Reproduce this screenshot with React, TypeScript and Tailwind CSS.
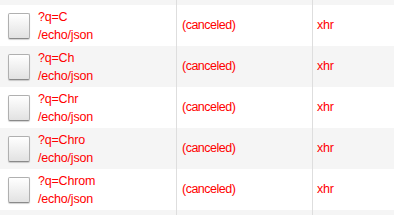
import React from "react";

const rows = ["C", "Ch", "Chr", "Chro", "Chrom"];

function Checkbox() {
  return (
    <div className="w-[22px] h-[26px] rounded-[2px] border border-[#b0b0b0] border-b-[#8a8a8a] bg-gradient-to-b from-[#ffffff] to-[#e2e2e2] shadow-[0_1px_1px_rgba(0,0,0,0.18)]" />
  );
}

function Row({ q, bg }: { q: string; bg: string }) {
  return (
    <div className={`flex h-[41px] ${bg}`}>
      <div className="w-[177px] flex items-center border-r border-[#dedede] pl-[8px]">
        <Checkbox />
        <div className="ml-[8px] flex flex-col leading-[18px]">
          <span>?q={q}</span>
          <span>/echo/json</span>
        </div>
      </div>
      <div className="w-[136px] flex items-center border-r border-[#dedede] pl-[5px] tracking-[-0.5px]">
        (canceled)
      </div>
      <div className="flex-1 flex items-center pl-[4px]">xhr</div>
    </div>
  );
}

function Partial({ bg, h }: { bg: string; h: string }) {
  return (
    <div className={`flex ${h} ${bg}`}>
      <div className="w-[177px] border-r border-[#dedede]" />
      <div className="w-[136px] border-r border-[#dedede]" />
      <div className="flex-1" />
    </div>
  );
}

export default function App() {
  return (
    <div
      className="w-[394px] h-[215px] overflow-hidden bg-white text-[12.5px] tracking-[-0.2px] text-[#ff0000]"
      style={{ fontFamily: '"Liberation Sans", Arial, sans-serif' }}
    >
      <Partial bg="bg-[#f5f5f5]" h="h-[5px]" />
      {rows.map((q, i) => (
        <Row key={q} q={q} bg={i % 2 === 0 ? "bg-white" : "bg-[#f5f5f5]"} />
      ))}
      <Partial bg="bg-[#f5f5f5]" h="h-[5px]" />
    </div>
  );
}
